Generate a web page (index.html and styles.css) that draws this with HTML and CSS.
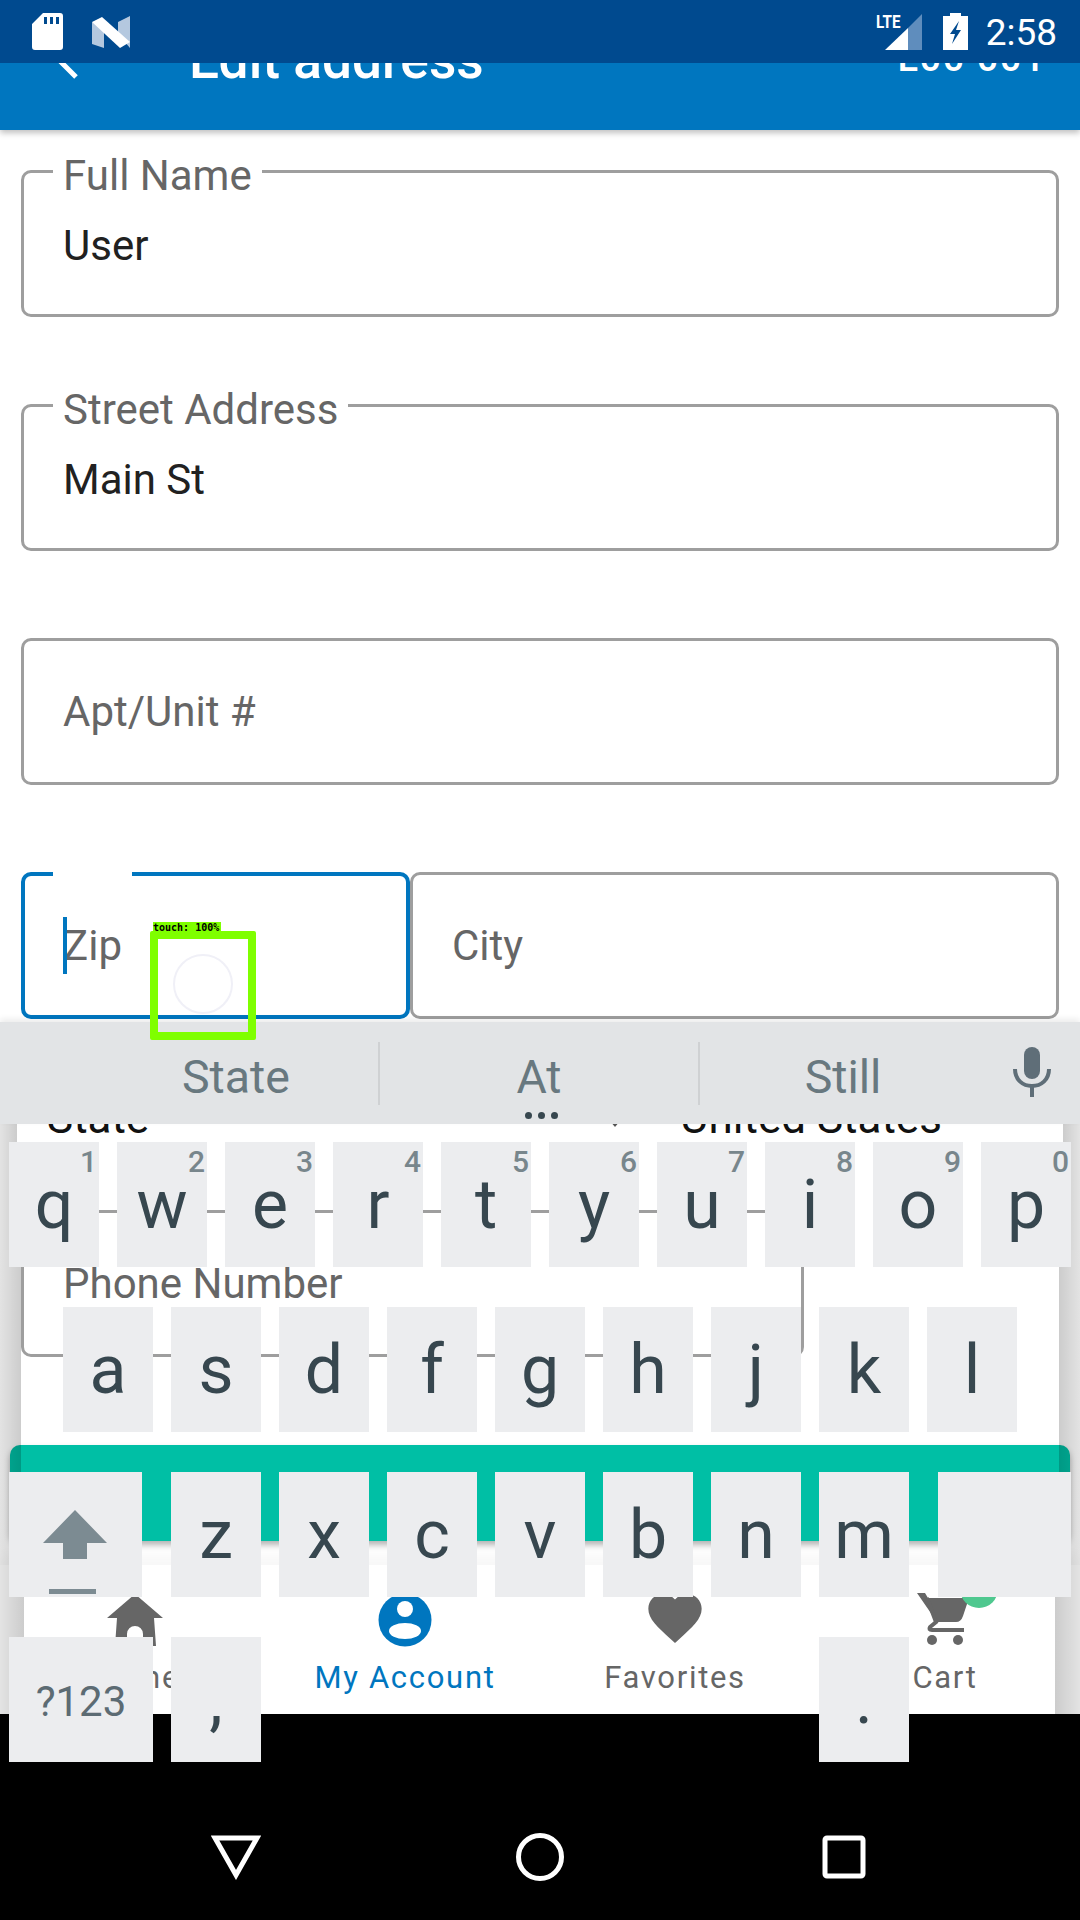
FILE: index.html
```html
<!DOCTYPE html>
<html lang="en">
<head>
<meta charset="utf-8">
<title>Edit address</title>
<link rel="stylesheet" href="styles.css">
</head>
<body>
<div class="screen">
  <header class="status">
    <div class="status-group">
      <svg class="ic-sd" viewBox="0 0 31 37"><path fill="#fff" fill-rule="evenodd" d="M11 0H28a3 3 0 0 1 3 3V34a3 3 0 0 1-3 3H3a3 3 0 0 1-3-3V11zM12 4V11H15V4zM18 4V11H21V4zM24 4V11H27V4z"/></svg>
      <svg class="ic-n" viewBox="0 0 38 32"><path fill="#b4c8df" d="M0 6 12 12V32L0 28zM38 0V32L26 18V6z"/><path fill="#fff" d="M0 6 10 1 38 26 28 32z"/></svg>
    </div>
    <div class="status-group status-right">
      <div class="signal">
        <span class="lte">LTE</span>
        <svg class="ic-signal" viewBox="0 0 37 36"><path fill="#5f8dbd" d="M37 0V36H23V14z"/><path fill="#fff" d="M0 36 23 14V36z"/></svg>
      </div>
      <svg class="ic-batt" viewBox="0 0 25 37"><path fill="#fff" d="M7 0H18V3H25V37H0V3H7z"/><path fill="#004a8f" d="M16 8 7 21H12L9 31 18 17H13z"/></svg>
      <span class="time">2:58</span>
    </div>
  </header>

  <div class="appbar">
    <svg class="ic-back" viewBox="0 0 30 50"><path fill="none" stroke="#fff" stroke-width="5" d="M24 4 4 24 24 44"/></svg>
    <h1 class="title">Edit address</h1>
    <span class="store">L00 001</span>
  </div>

  <main class="form">
    <div class="field">
      <span class="label">Full Name</span>
      <span class="value">User</span>
    </div>
    <div class="field">
      <span class="label">Street Address</span>
      <span class="value">Main St</span>
    </div>
    <div class="field">
      <span class="placeholder">Apt/Unit #</span>
    </div>
    <div class="pair">
      <div class="field field-focus">
        <span class="notch"></span>
        <span class="caret"></span>
        <span class="placeholder">Zip</span>
      </div>
      <div class="field field-city">
        <span class="placeholder">City</span>
      </div>
    </div>
    <div class="selects">
      <span class="select-value">State</span>
      <span class="select-arrow"></span>
      <span class="select-value">United States</span>
    </div>
    <div class="field field-phone">
      <span class="placeholder">Phone Number</span>
    </div>
    <button class="save">SAVE</button>
  </main>

  <nav class="tabs">
    <div class="tab">
      <svg class="tab-icon" viewBox="0 0 64 64"><path fill="#666" d="M32 8 60 32H51L53 60H40V48A8 8 0 0 0 24 48V60H12L14 32H4Z"/></svg>
      <span class="tab-label">Home</span>
    </div>
    <div class="tab tab-active">
      <svg class="tab-icon" viewBox="0 0 64 64"><circle cx="32" cy="34" r="26.5" fill="#0076bf"/><circle cx="32" cy="23" r="8" fill="#fff"/><ellipse cx="32" cy="45" rx="16" ry="8" fill="#fff"/></svg>
      <span class="tab-label">My Account</span>
    </div>
    <div class="tab">
      <svg class="tab-icon" viewBox="0 0 24 24"><path fill="#666" d="M12 21.35l-1.45-1.32C5.4 15.36 2 12.28 2 8.5 2 5.42 4.42 3 7.5 3c1.74 0 3.41.81 4.5 2.09C13.09 3.81 14.76 3 16.5 3 19.58 3 22 5.42 22 8.5c0 3.78-3.4 6.86-8.55 11.54L12 21.35z"/></svg>
      <span class="tab-label">Favorites</span>
    </div>
    <div class="tab tab-cart">
      <span class="badge"></span>
      <svg class="tab-icon" viewBox="0 0 64 64"><path fill="#666" d="M4 7H12L15 12H56L50 30Q48 36 43 36H24Z"/><path fill="none" stroke="#666" stroke-width="4" d="M14 12 23 36 17 41Q15 44 19 44H51"/><circle cx="19" cy="54" r="5" fill="#666"/><circle cx="45" cy="54" r="5" fill="#666"/></svg>
      <span class="tab-label">Cart</span>
    </div>
  </nav>

  <footer class="sysnav">
    <svg class="sys-back" viewBox="0 0 50 46"><path fill="none" stroke="#fff" stroke-width="5" d="M4 4H46L25 41Z"/></svg>
    <svg class="sys-home" viewBox="0 0 50 50"><circle cx="25" cy="25" r="21.5" fill="none" stroke="#fff" stroke-width="5"/></svg>
    <svg class="sys-recent" viewBox="0 0 44 44"><rect x="3" y="3" width="38" height="38" rx="2" fill="none" stroke="#fff" stroke-width="5"/></svg>
  </footer>

  <div class="side side-left"><i class="seg seg-a"></i><i class="seg seg-b"></i><i class="seg seg-c"></i></div>
  <div class="side side-right"><i class="seg seg-a"></i><i class="seg seg-b"></i><i class="seg seg-c"></i></div>

  <section class="keyboard">
    <div class="suggestions">
      <span class="sugg sugg-a">State</span>
      <span class="sugg sugg-b">At<span class="dots"><i></i><i></i><i></i></span></span>
      <span class="sugg sugg-c">Still</span>
      <svg class="ic-mic" viewBox="0 0 38 50"><rect x="11" y="0" width="16" height="32" rx="8" fill="#5f6e78"/><path fill="none" stroke="#5f6e78" stroke-width="4" d="M2 22C2 33 10 39 19 39S36 33 36 22M19 38V50"/></svg>
    </div>
    <div class="keys">
      <div class="row">
        <div class="key">q<span class="hint">1</span></div>
        <div class="key">w<span class="hint">2</span></div>
        <div class="key">e<span class="hint">3</span></div>
        <div class="key">r<span class="hint">4</span></div>
        <div class="key">t<span class="hint">5</span></div>
        <div class="key">y<span class="hint">6</span></div>
        <div class="key">u<span class="hint">7</span></div>
        <div class="key">i<span class="hint">8</span></div>
        <div class="key">o<span class="hint">9</span></div>
        <div class="key">p<span class="hint">0</span></div>
      </div>
      <div class="row row-home">
        <div class="key">a</div>
        <div class="key">s</div>
        <div class="key">d</div>
        <div class="key">f</div>
        <div class="key">g</div>
        <div class="key">h</div>
        <div class="key">j</div>
        <div class="key">k</div>
        <div class="key">l</div>
      </div>
      <div class="row">
        <div class="key key-shift">
          <svg class="ic-shift" viewBox="0 0 64 50"><path fill="#7c8b92" d="M32 0 64 33H44V49H20V33H0Z"/></svg>
          <span class="shift-bar"></span>
        </div>
        <div class="key">z</div>
        <div class="key">x</div>
        <div class="key">c</div>
        <div class="key">v</div>
        <div class="key">b</div>
        <div class="key">n</div>
        <div class="key">m</div>
        <div class="key key-del"></div>
      </div>
      <div class="row row-bottom">
        <div class="key key-sym">?123</div>
        <div class="key">,</div>
        <div class="key key-period">.</div>
      </div>
    </div>
  </section>

  <div class="touch">
    <span class="touch-label">touch: 100%</span>
    <span class="touch-ring"></span>
  </div>
</div>
</body>
</html>
```
FILE: styles.css
```css
* { box-sizing: border-box; }
html, body { margin: 0; padding: 0; background: #fff; }
body { font-family: Roboto, "Noto Sans", sans-serif; }

.screen {
  position: relative;
  width: 1080px;
  height: 1920px;
  overflow: hidden;
  display: flex;
  flex-direction: column;
  background: #fff;
}

/* status bar */
.status {
  position: relative;
  z-index: 3;
  flex: none;
  height: 63px;
  background: #004a8f;
  display: flex;
  justify-content: space-between;
  align-items: flex-start;
  padding: 13px 23px 0 32px;
}
.status-group { display: flex; align-items: flex-start; }
.ic-sd { width: 31px; height: 37px; }
.ic-n { width: 38px; height: 32px; margin: 3px 0 0 29px; }
.signal { position: relative; width: 46px; height: 36px; margin-top: 1px; }
.ic-signal { position: absolute; left: 9px; top: 0; width: 37px; height: 36px; }
.lte {
  position: absolute;
  left: 0;
  top: 0;
  font-size: 19px;
  line-height: 16px;
  font-weight: 700;
  color: #fff;
  transform: scaleX(.8);
  transform-origin: left top;
}
.ic-batt { width: 25px; height: 37px; margin-left: 21px; }
.time {
  margin-left: 18px;
  color: #fff;
  font-size: 37px;
  line-height: 40px;
}

/* app bar */
.appbar {
  position: relative;
  z-index: 2;
  flex: none;
  height: 67px;
  background: #0076bf;
  box-shadow: 0 3px 6px rgba(0, 0, 0, .25);
  display: flex;
  align-items: flex-start;
}
.ic-back { flex: none; width: 30px; height: 50px; margin: -30px 0 0 52px; }
.title {
  margin: -34px 0 0 107px;
  font-size: 53.3px;
  line-height: 62px;
  font-weight: 500;
  color: #fff;
}
.store {
  margin: -27px 34px 0 auto;
  font-size: 38px;
  line-height: 44px;
  letter-spacing: 1.5px;
  font-weight: 500;
  color: #fff;
}

/* form */
.form {
  flex: 1;
  display: flex;
  flex-direction: column;
  padding-top: 40px;
}
.field {
  position: relative;
  flex: none;
  height: 147px;
  margin: 0 21px 87px;
  border: 3px solid #9e9e9e;
  border-radius: 10px;
  display: flex;
  align-items: center;
  padding: 0 39px;
  background: #fff;
}
.label {
  position: absolute;
  left: 29px;
  top: -21px;
  padding: 0 10px;
  background: #fff;
  font-size: 42px;
  line-height: 48px;
  color: #666;
}
.value {
  font-size: 42px;
  line-height: 48px;
  color: #212121;
  margin-top: 4px;
}
.placeholder {
  font-size: 42px;
  line-height: 48px;
  color: #666;
}

.pair {
  display: flex;
  flex: none;
  margin: 0 21px 87px;
}
.pair .field { margin: 0; }
.field-focus {
  flex: none;
  width: 389px;
  padding: 0 38px;
  border: 4px solid #0076bf;
}
.pair .field-city { flex: 1; }
.notch {
  position: absolute;
  left: 28px;
  top: -4px;
  width: 79px;
  height: 4px;
  background: #fff;
}
.caret {
  position: absolute;
  left: 38px;
  top: 41px;
  width: 4px;
  height: 57px;
  background: #0076bf;
}

.selects {
  flex: none;
  height: 104px;
  padding-left: 47px;
  display: grid;
  grid-template-columns: 563px 70px auto;
  justify-content: start;
  align-items: start;
  color: #111;
}
.select-value {
  margin-top: -12px;
  font-size: 44px;
  line-height: 48px;
}
.select-arrow {
  width: 0;
  height: 0;
  margin-top: 15px;
  border-left: 5px solid transparent;
  border-right: 5px solid transparent;
  border-top: 6px solid #555;
}

.form .field-phone { margin: 0 276px 88px 21px; }

.save {
  flex: none;
  height: 96px;
  margin: 0 10px 24px;
  border: 0;
  border-radius: 10px;
  background: #00bfa5;
  box-shadow: 0 4px 6px rgba(0, 0, 0, .3);
  color: #fff;
  font-family: inherit;
  font-size: 37px;
  font-weight: 500;
}

/* bottom navigation */
.tabs {
  position: relative;
  flex: none;
  height: 149px;
  display: grid;
  grid-template-columns: repeat(4, 270px);
  background: #fff;
  box-shadow: 0 -10px 12px rgba(0, 0, 0, .03);
}
.tab {
  position: relative;
  display: flex;
  flex-direction: column;
  align-items: center;
  padding-top: 21px;
}
.tab-icon { width: 64px; height: 64px; flex: none; }
.tab-label {
  margin-top: 10px;
  font-size: 31px;
  line-height: 36px;
  letter-spacing: 1.7px;
  color: #666;
}
.tab-active .tab-label { color: #0076bf; }
.badge {
  position: absolute;
  left: 150px;
  top: 5px;
  width: 38px;
  height: 38px;
  border-radius: 50%;
  background: #4fc88f;
}

/* android navigation */
.sysnav {
  position: relative;
  flex: none;
  height: 206px;
  background: #000;
  display: flex;
  align-items: flex-start;
  padding-left: 211px;
}
.sys-back { width: 50px; height: 46px; margin-top: 120px; }
.sys-home { width: 50px; height: 50px; margin: 118px 0 0 254px; }
.sys-recent { width: 44px; height: 44px; margin: 121px 0 0 257px; }

/* side scrims */
.side {
  position: absolute;
  top: 1124px;
  bottom: 206px;
  display: flex;
  flex-direction: column;
  z-index: 4;
  pointer-events: none;
}
.side-left { left: 0; align-items: flex-start; }
.side-right { right: 0; align-items: flex-end; }
.seg { display: block; }
.seg-a { height: 126px; }
.seg-b { height: 315px; }
.seg-c { flex: 1; }
.side-left .seg { background: linear-gradient(to right, rgba(0,0,0,.11), rgba(0,0,0,.2)); }
.side-right .seg { background: linear-gradient(to left, rgba(0,0,0,.11), rgba(0,0,0,.2)); }
.side-left .seg-a { width: 17px; }
.side-left .seg-b { width: 21px; }
.side-left .seg-c { width: 24px; }
.side-right .seg-a { width: 17px; }
.side-right .seg-b { width: 21px; }
.side-right .seg-c { width: 25px; }

/* keyboard */
.keyboard {
  position: absolute;
  left: 0;
  top: 1022px;
  width: 1080px;
  z-index: 5;
}
.suggestions {
  position: relative;
  height: 102px;
  background: #e2e4e6;
  box-shadow: 0 -3px 6px rgba(0, 0, 0, .08);
  display: grid;
  grid-template-columns: 94px 284px 322px 286px 94px;
}
.sugg {
  position: relative;
  text-align: center;
  font-size: 46.5px;
  line-height: 52px;
  padding-top: 29px;
  color: #68787f;
}
.sugg-a { grid-column: 2; }
.sugg-b { grid-column: 3; }
.sugg-c { grid-column: 4; }
.sugg-b::before, .sugg-b::after {
  content: "";
  position: absolute;
  top: 20px;
  height: 63px;
  width: 2px;
  background: #cfd1d3;
}
.sugg-b::before { left: 0; }
.sugg-b::after { right: 0; }
.dots {
  position: absolute;
  left: 147px;
  top: 90px;
  display: flex;
  gap: 6px;
}
.dots i {
  display: block;
  width: 7px;
  height: 7px;
  border-radius: 50%;
  background: #37474f;
}
.ic-mic {
  grid-column: 5;
  width: 38px;
  height: 50px;
  margin: 25px 0 0 27px;
}
.keys {
  display: flex;
  flex-direction: column;
  gap: 40px;
  padding-top: 18px;
}
.row {
  display: flex;
  gap: 18px;
  padding: 0 9px;
}
.row-home { padding-left: 63px; }
.row-bottom { padding-right: 171px; }
.key {
  position: relative;
  flex: none;
  width: 90px;
  height: 125px;
  background: #ecedef;
  color: #37474f;
  font-size: 68px;
  line-height: 80px;
  padding-top: 23px;
  text-align: center;
}
.hint {
  position: absolute;
  top: 3px;
  right: 2px;
  font-size: 30px;
  line-height: 34px;
  font-weight: 500;
  color: #78868c;
}
.key-shift { width: 133px; margin-right: 11px; }
.key-del { width: 133px; margin-left: 11px; }
.key-sym {
  width: 144px;
  font-size: 42px;
  line-height: 48px;
  padding-top: 41px;
  color: #5c6b73;
}
.key-period { margin-left: auto; }
.ic-shift {
  position: absolute;
  left: 34px;
  top: 38px;
  width: 64px;
  height: 50px;
}
.shift-bar {
  position: absolute;
  left: 40px;
  top: 117px;
  width: 47px;
  height: 5px;
  background: #7c8b92;
}

/* touch indicator */
.touch {
  position: absolute;
  left: 150px;
  top: 931px;
  width: 106px;
  height: 109px;
  border: 8px solid #7fff00;
  border-radius: 2px;
  z-index: 6;
}
.touch-label {
  position: absolute;
  left: -5px;
  top: -17px;
  width: 68px;
  height: 11px;
  background: #7fff00;
  font-family: "DejaVu Sans Mono", monospace;
  font-weight: 700;
  font-size: 10px;
  line-height: 11px;
  color: #000;
  white-space: nowrap;
}
.touch-ring {
  position: absolute;
  left: 15px;
  top: 15px;
  width: 60px;
  height: 60px;
  border: 2px solid #f0f0f7;
  border-radius: 50%;
}
```
